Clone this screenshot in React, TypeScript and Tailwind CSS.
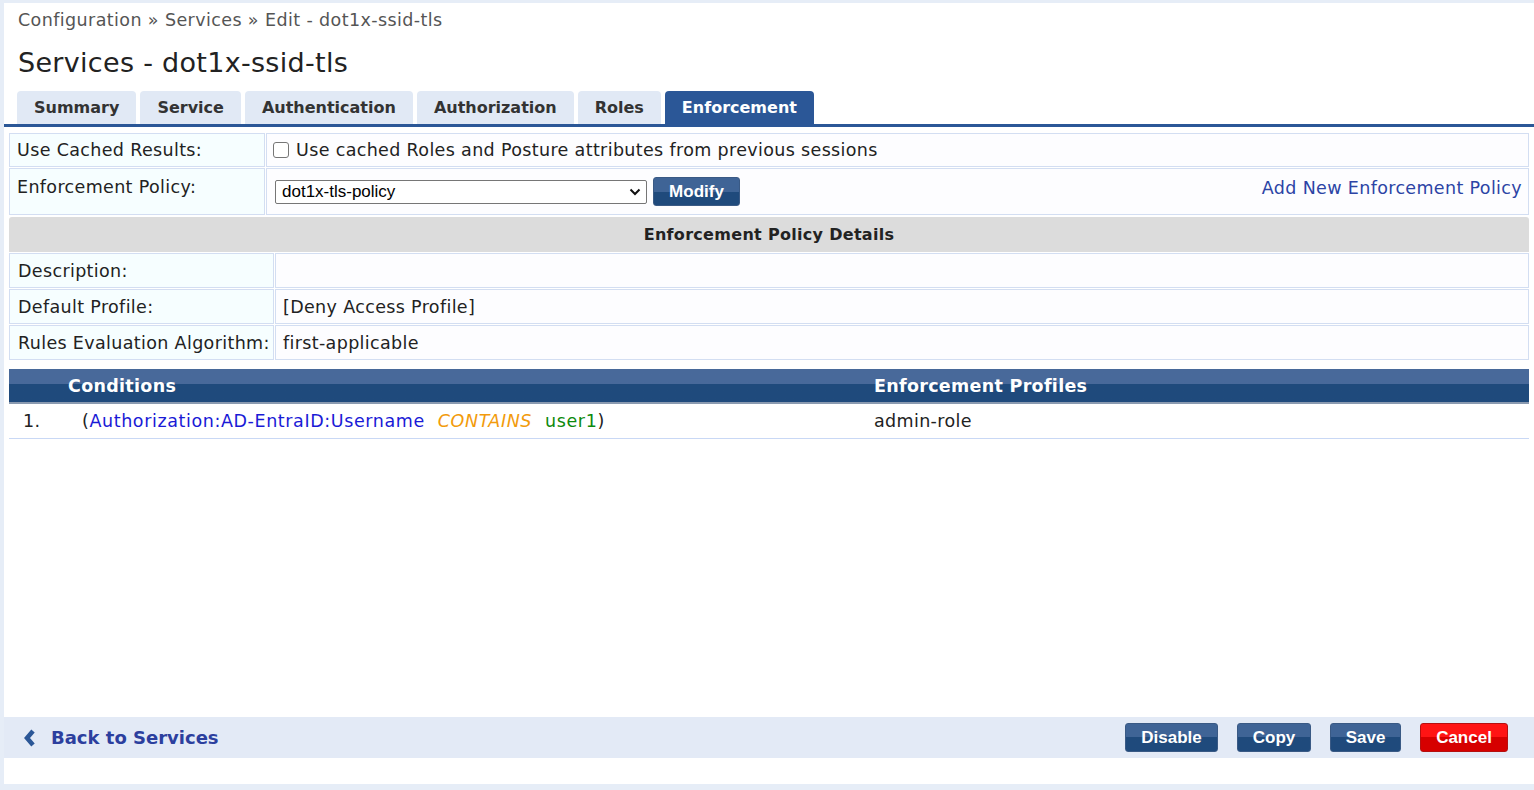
import React from 'react';

const tabs = ['Summary', 'Service', 'Authentication', 'Authorization', 'Roles', 'Enforcement'];

const blueBtn =
  'h-[29px] rounded-[3px] border border-[#3a5a85] bg-gradient-to-b from-[#3f6496] from-50% to-[#1f4a7c] to-50% px-[14px] text-[17px] font-bold tracking-normal text-white font-["Liberation_Sans",Arial,sans-serif]';

function Tab({ name, active }: { name: string; active: boolean }) {
  return (
    <div
      className={
        'flex h-[33px] items-center rounded-t-[4px] px-[17px] pt-[1px] text-[16px] font-bold tracking-normal ' +
        (active ? 'bg-[#2b5797] text-white' : 'bg-[#e1e9f5] text-[#333]')
      }
    >
      {name}
    </div>
  );
}

export default function App() {
  return (
    <div className="h-[790px] w-[1534px] overflow-hidden bg-[#e6edf7] pt-[3px] pl-[4px] font-['DejaVu_Sans',Verdana,sans-serif] tracking-[0.35px]">
      <div className="flex h-[781px] flex-col bg-white">
        <div className="pl-[14px] pt-[4px] text-[17.5px] tracking-[0.4px] text-[#555]">
          Configuration » Services » Edit - dot1x-ssid-tls
        </div>
        <div className="pl-[14px] pt-[15px] text-[27px] leading-[30px] tracking-[0.3px] text-[#222]">
          Services - dot1x-ssid-tls
        </div>
        <div className="mt-[13px] flex gap-[4px] border-b-[3px] border-[#2b5797] pl-[13px]">
          {tabs.map((t) => (
            <Tab key={t} name={t} active={t === 'Enforcement'} />
          ))}
        </div>

        <div className="px-[4px] pt-[5px] text-[17.5px] text-[#222]">
          <table className="w-full border-separate border-spacing-[1px]">
            <tbody>
              <tr>
                <td className="h-[34px] w-[256px] border border-[#d3def2] bg-[#f6feff] pl-[7px]">Use Cached Results:</td>
                <td className="border border-[#d3def2] bg-[#fdfdff] pl-[6px]">
                  <label className="flex items-center gap-[7px]">
                    <span className="inline-block h-[16px] w-[16px] rounded-[3px] border border-[#767676] bg-white" />
                    Use cached Roles and Posture attributes from previous sessions
                  </label>
                </td>
              </tr>
              <tr>
                <td className="h-[47px] border border-[#d3def2] bg-[#f6feff] pb-[10px] pl-[7px]">Enforcement Policy:</td>
                <td className="border border-[#d3def2] bg-[#fdfdff] pl-[8px] pr-[6px]">
                  <div className="flex items-center">
                    <div className="flex h-[24px] w-[372px] items-center justify-between rounded-[2px] border border-[#767676] bg-white pl-[6px] pr-[5px] font-['Liberation_Sans',Arial,sans-serif] text-[17px] tracking-normal text-black">
                      dot1x-tls-policy
                      <svg width="12" height="8" viewBox="0 0 12 8">
                        <path d="M1.5 1.5 L6 6 L10.5 1.5" fill="none" stroke="#111" strokeWidth="2" />
                      </svg>
                    </div>
                    <button className={blueBtn + ' ml-[6px] h-[28px] w-[87px]'}>Modify</button>
                    <span className="ml-auto pb-[8px] text-[#2c44a5]">Add New Enforcement Policy</span>
                  </div>
                </td>
              </tr>
            </tbody>
          </table>

          <table className="w-full border-separate border-spacing-[1px]">
            <tbody>
              <tr>
                <td
                  colSpan={2}
                  className="h-[35px] rounded-t-[3px] bg-[#dcdcdc] text-center text-[16px] font-bold tracking-[0.3px] text-[#222]"
                >
                  Enforcement Policy Details
                </td>
              </tr>
              <tr>
                <td className="h-[35px] w-[265px] border border-[#d3def2] bg-[#f6feff] pl-[8px]">Description:</td>
                <td className="border border-[#d3def2] bg-[#fdfdff] pl-[7px]"></td>
              </tr>
              <tr>
                <td className="h-[35px] border border-[#d3def2] bg-[#f6feff] pl-[8px]">Default Profile:</td>
                <td className="border border-[#d3def2] bg-[#fdfdff] pl-[7px]">[Deny Access Profile]</td>
              </tr>
              <tr>
                <td className="h-[35px] border border-[#d3def2] bg-[#f6feff] pl-[8px]">Rules Evaluation Algorithm:</td>
                <td className="border border-[#d3def2] bg-[#fdfdff] pl-[7px]">first-applicable</td>
              </tr>
            </tbody>
          </table>

          <div className="mt-[8px] px-[1px]">
            <div className="flex h-[35px] items-center border-b-2 border-[#8a9ab0] bg-gradient-to-b from-[#48699a] from-45% to-[#1f4a7c] to-45% text-[17.5px] font-bold tracking-[0.3px] text-white">
              <div className="w-[865px] pl-[59px]">Conditions</div>
              <div>Enforcement Profiles</div>
            </div>
            <div className="flex h-[35px] items-center border-b border-[#c9d8f5]">
              <div className="w-[73px] pl-[14px]">1.</div>
              <div className="w-[792px] tracking-[0.6px]">
                <span className="text-[#222]">(</span>
                <span className="text-[#1a1ad6]">Authorization:AD-EntraID:Username</span>
                <span className="ml-[13px] italic text-[#f29b0c]">CONTAINS</span>
                <span className="ml-[13px] text-[#0d8a0d]">user1</span>
                <span className="text-[#222]">)</span>
              </div>
              <div>admin-role</div>
            </div>
          </div>
        </div>

        <div className="flex-1" />

        <div className="mb-[26px] flex h-[41px] items-center bg-[#e3eaf6] pl-[19px] pr-[26px]">
          <svg width="13" height="18" viewBox="0 0 13 18" className="mr-[15px]">
            <path d="M10 2 L4 9 L10 16" fill="none" stroke="#2b5797" strokeWidth="4.5" strokeLinejoin="miter" />
          </svg>
          <span className="text-[18px] font-bold tracking-normal text-[#2c3f9e]">Back to Services</span>
          <div className="ml-auto flex gap-[19px]">
            <button className={blueBtn + ' w-[93px]'}>Disable</button>
            <button className={blueBtn + ' w-[74px]'}>Copy</button>
            <button className={blueBtn + ' w-[71px]'}>Save</button>
            <button className="h-[29px] w-[88px] rounded-[3px] border border-[#b51010] bg-gradient-to-b from-[#ff1414] from-50% to-[#d60000] to-50% font-['Liberation_Sans',Arial,sans-serif] text-[17px] font-bold tracking-normal text-white">
              Cancel
            </button>
          </div>
        </div>
      </div>
    </div>
  );
}
